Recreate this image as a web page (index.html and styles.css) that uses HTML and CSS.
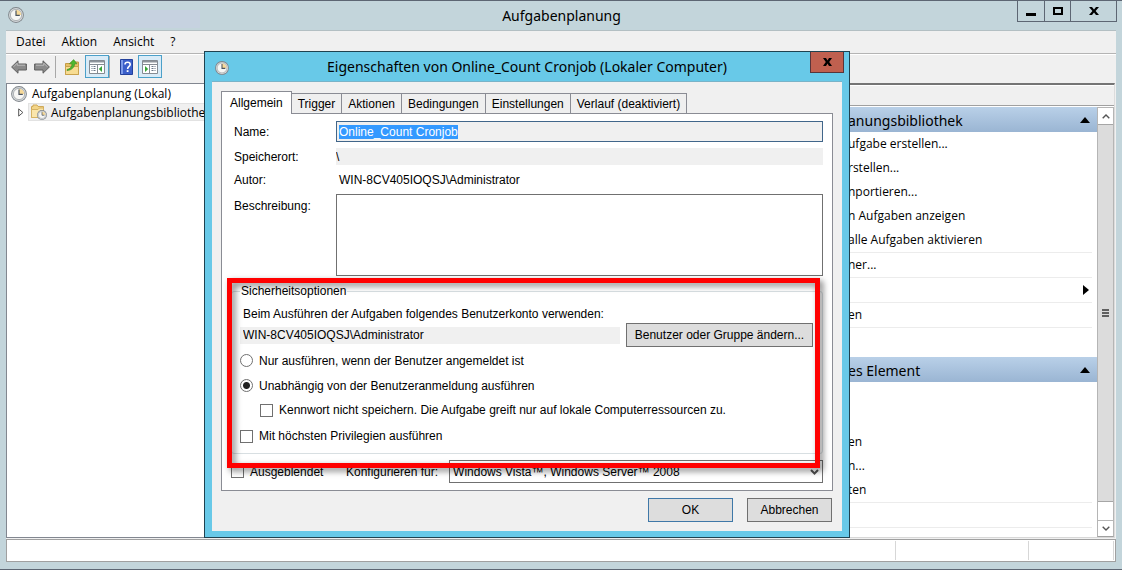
FILE: index.html
```html
<!DOCTYPE html>
<html lang="de">
  <head>
    <meta charset="UTF-8" />
    <meta name="viewport" content="width=device-width, initial-scale=1.0" />
    <title>Aufgabenplanung</title>
    <link rel="stylesheet" href="styles.css">
  </head>
  <body>
    <svg class="defs" aria-hidden="true">
      <symbol id="clock" viewBox="0 0 16 16">
        <circle cx="8" cy="8" r="7.9" fill="#7f858a" />
        <circle cx="8" cy="8" r="7" fill="#d4d8da" />
        <circle cx="8" cy="8" r="5.6" fill="#f7f7f5" stroke="#8b9095" stroke-width="0.6" />
        <path d="M8 8V2.8A5.2 5.2 0 0 1 13.2 8z" fill="#f6d999" />
        <path d="M8 3.4V8.4H11.8" fill="none" stroke="#4c5560" stroke-width="1.2" />
      </symbol>
      <symbol id="arrow" viewBox="0 0 16 14">
        <path d="M0.6 7L7 0.8V4H15.4V10H7V13.2z" fill="#8b8b8b" stroke="#5f5f5f" />
        <path d="M2.6 6.8L6.2 3.2V5.2H14" fill="none" stroke="#bdbdbd" />
      </symbol>
      <symbol id="pane" viewBox="0 0 16 14">
        <path d="M0.5 0.5H15.5V13.5H0.5z" fill="#fff" stroke="#858b92" />
        <path d="M1 1H15V2.5H1z" fill="#8e949b" />
        <path d="M1 4.5H15M8.5 5V13" stroke="#858b92" />
        <path d="M2.5 6.5H6.5M2.5 8.5H6.5M2.5 10.5H6.5" stroke="#697585" stroke-dasharray="1 1 2" />
        <path d="M13 6V12L9.8 9z" fill="#36a536" />
      </symbol>
    </svg>

    <div class="window">
      <header class="titlebar">
        <svg class="icon"><use href="#clock" /></svg>
        <h1>Aufgabenplanung</h1>
        <div class="windowButtons">
          <button class="minimize" aria-label="Minimieren"><svg width="10" height="10"><path d="M0 7H10V10H0z" /></svg></button>
          <button class="maximize" aria-label="Maximieren"><svg width="10" height="8"><path d="M1 1H9V7H1z" fill="none" stroke="#000" stroke-width="2" /></svg></button>
          <button class="close" aria-label="Schließen"><svg width="10" height="8"><path d="M0 0H3L5 2.6L7 0H10L6.6 4L10 8H7L5 5.4L3 8H0L3.4 4z" /></svg></button>
        </div>
      </header>

      <div class="frame">
        <nav class="menubar">
          <button>Datei</button>
          <button>Aktion</button>
          <button>Ansicht</button>
          <button>?</button>
        </nav>

        <div class="toolbar">
          <button aria-label="Zurück"><svg width="16" height="14"><use href="#arrow" /></svg></button>
          <button class="forward" aria-label="Vorwärts"><svg class="flip" width="16" height="14"><use href="#arrow" /></svg></button>
          <span class="divider"></span>
          <button class="up" aria-label="Übergeordneter Ordner">
            <svg width="16" height="16">
              <path d="M1.5 4.5H6L7.5 3H14.5V15.5H1.5z" fill="#e8c066" stroke="#c39b45" />
              <path d="M1.5 7.5H14.5V15.5H1.5z" fill="#f7dc92" stroke="#c9a24d" />
              <path d="M3 10.5C6 10 8 8 8 4.8H5.5L9.6 0.6L13 4.8H10.6C10.6 8.6 7 11.4 3 11.6z" fill="#4cb82e" stroke="#398a22" stroke-width="0.6" />
            </svg>
          </button>
          <button class="toggle" aria-label="Konsolenstruktur"><svg width="16" height="14"><use href="#pane" /></svg></button>
          <span class="divider"></span>
          <button class="help" aria-label="Hilfe">
            <svg width="13" height="16">
              <path d="M0.5 0.5H12.5V15.5H0.5z" fill="#3b5fca" stroke="#24419c" />
              <path d="M1 1H3V15H1z" fill="#7d9bea" />
              <path d="M5 5.4C5 2.6 10.2 2.6 10.2 5.4C10.2 7.4 7.6 7.4 7.6 10" fill="none" stroke="#fff" stroke-width="1.6" />
              <path d="M6.7 11.2H8.5V13H6.7z" fill="#fff" />
            </svg>
          </button>
          <button class="toggle" aria-label="Aktionsbereich"><svg class="flip" width="16" height="14"><use href="#pane" /></svg></button>
        </div>

        <main class="panes">
          <div class="tree">
            <div class="root"><svg class="icon"><use href="#clock" /></svg>Aufgabenplanung (Lokal)</div>
            <div class="branch">
              <svg class="expander" width="6" height="9"><path d="M0.7 0.9L4.9 4.5L0.7 8.1z" fill="#fff" stroke="#555" /></svg>
              <div class="selected">
                <svg width="17" height="16">
                  <path d="M1.5 13.5V2.5H3V1H7L8 2.5H13.5V13.5z" fill="#f3d588" stroke="#cfa958" />
                  <path d="M1.5 5.5H8L9.5 4H13.5V13.5H1.5z" fill="#fae5ab" stroke="#d6b363" />
                  <svg x="7" y="6" width="10" height="10"><use href="#clock" /></svg>
                </svg>
                Aufgabenplanungsbibliothek
              </div>
            </div>
          </div>

          <div class="center"></div>

          <aside class="actions">
            <div class="actionsTitle"></div>
            <div class="actionsBody">
              <div class="actionsList">
                <h2><span>anungsbibliothek</span><svg width="10" height="6"><path d="M5 0L10 6H0z" /></svg></h2>
                <ul>
                  <li>ufgabe erstellen...</li>
                  <li>rstellen...</li>
                  <li>nportieren...</li>
                  <li>n Aufgaben anzeigen</li>
                  <li>alle Aufgaben aktivieren</li>
                  <li class="line">ner...</li>
                  <li class="line submenu"><svg width="6" height="10"><path d="M0 0L6 5L0 10z" /></svg></li>
                  <li class="line">en</li>
                  <li class="line"></li>
                </ul>
                <h2><span>es Element</span><svg width="10" height="6"><path d="M5 0L10 6H0z" /></svg></h2>
                <ul>
                  <li></li>
                  <li></li>
                  <li>en</li>
                  <li>n...</li>
                  <li>ten</li>
                  <li class="line"></li>
                  <li class="line end"></li>
                </ul>
              </div>
              <div class="scrollbar">
                <button aria-label="Nach oben"><svg width="8" height="5"><path d="M0.7 4.3L4 1L7.3 4.3" fill="none" stroke="#555" stroke-width="1.4" /></svg></button>
                <div class="thumb"><svg width="7" height="8"><path d="M0 1H7M0 4H7M0 7H7" stroke="#606060" stroke-width="2" /></svg></div>
                <button aria-label="Nach unten"><svg width="8" height="5"><path d="M0.7 0.7L4 4L7.3 0.7" fill="none" stroke="#555" stroke-width="1.4" /></svg></button>
              </div>
            </div>
          </aside>
        </main>

        <footer class="statusbar">
          <span class="message"></span>
          <span class="wide"></span>
          <span class="narrow"></span>
        </footer>
      </div>
    </div>

    <section class="dialog" role="dialog" aria-labelledby="dialogTitle">
      <header class="dialogTitlebar">
        <svg class="icon"><use href="#clock" /></svg>
        <h2 id="dialogTitle">Eigenschaften von Online_Count Cronjob (Lokaler Computer)</h2>
        <button class="dialogClose" aria-label="Schließen"><svg width="9" height="8"><path d="M0 0H3L4.5 2.4L6 0H9L6.2 4L9 8H6L4.5 5.6L3 8H0L2.8 4z" /></svg></button>
      </header>

      <form class="dialogContent">
        <div class="tabs" role="tablist">
          <button type="button" role="tab" class="active" aria-selected="true">Allgemein</button>
          <button type="button" role="tab">Trigger</button>
          <button type="button" role="tab">Aktionen</button>
          <button type="button" role="tab">Bedingungen</button>
          <button type="button" role="tab">Einstellungen</button>
          <button type="button" role="tab">Verlauf (deaktiviert)</button>
        </div>

        <div class="tabPanel" role="tabpanel">
          <div class="fields">
            <label for="name">Name:</label>
            <div class="nameBox"><output id="name">Online_Count Cronjob</output></div>
            <label for="location">Speicherort:</label>
            <input id="location" class="readonly" type="text" value="\" readonly />
            <label for="author">Autor:</label>
            <output id="author">WIN-8CV405IOQSJ\Administrator</output>
            <label for="description" class="top">Beschreibung:</label>
            <textarea id="description"></textarea>
          </div>

          <fieldset>
            <legend>Sicherheitsoptionen</legend>
            <label class="accountLabel" for="account">Beim Ausführen der Aufgaben folgendes Benutzerkonto verwenden:</label>
            <div class="account">
              <input id="account" class="readonly" type="text" value="WIN-8CV405IOQSJ\Administrator" readonly />
              <button type="button" class="button">Benutzer oder Gruppe ändern...</button>
            </div>
            <label class="option"><input type="radio" name="logon" />Nur ausführen, wenn der Benutzer angemeldet ist</label>
            <label class="option"><input type="radio" name="logon" checked />Unabhängig von der Benutzeranmeldung ausführen</label>
            <label class="option nested"><input type="checkbox" />Kennwort nicht speichern. Die Aufgabe greift nur auf lokale Computerressourcen zu.</label>
            <label class="option last"><input type="checkbox" />Mit höchsten Privilegien ausführen</label>
          </fieldset>

          <div class="configure">
            <label class="option hiddenTask"><input type="checkbox" />Ausgeblendet</label>
            <label for="target">Konfigurieren für:</label>
            <div class="selectBox">
              <select id="target">
                <option>Windows Vista™, Windows Server™ 2008</option>
              </select>
              <svg width="9" height="6"><path d="M1 1L4.5 4.5L8 1" fill="none" stroke="#505050" stroke-width="2" /></svg>
            </div>
          </div>
          <div class="highlight"></div>
        </div>

        <div class="dialogButtons">
          <button type="button" class="button default">OK</button>
          <button type="button" class="button">Abbrechen</button>
        </div>
      </form>
    </section>
  </body>
</html>
```
FILE: styles.css
```css
* {
  box-sizing: border-box;
}

body {
  margin: 0;
  font-family: 'Open Sans', 'Noto Sans', sans-serif;
  font-size: 12px;
  color: #000;
  position: relative;
}

h1,
h2,
ul {
  margin: 0;
  padding: 0;
  font-weight: normal;
  list-style: none;
}

button,
input,
select,
textarea {
  font: inherit;
  color: inherit;
  margin: 0;
  padding: 0;
  border: none;
  border-radius: 0;
  background: none;
}

svg {
  display: block;
  flex: none;
}

.defs {
  position: absolute;
  width: 0;
  height: 0;
}

.icon {
  width: 16px;
  height: 16px;
}

.flip {
  transform: scaleX(-1);
}

/* main window */
.window {
  display: flex;
  flex-direction: column;
  min-height: 100vh;
  padding: 0 5px 7px 6px;
  background-color: #c3d5db;
  border-top: 1px solid #5d6673;
  border-bottom: 1px solid #5d6673;
}

.titlebar {
  display: grid;
  grid-template-columns: 1fr auto 1fr;
  height: 29px;
  background: linear-gradient(#c6d2e0, #c6d2e0) 64px 9px / 130px 18px no-repeat;
}

.titlebar .icon {
  margin: 6px 0 0 2px;
}

.titlebar h1 {
  font-family: 'Noto Sans', 'Open Sans', sans-serif;
  font-size: 14px;
  line-height: 30px;
}

.windowButtons {
  display: flex;
  justify-self: end;
  height: 21px;
  border: 1px solid #5d6673;
  border-top: none;
}

.windowButtons button {
  display: flex;
  align-items: center;
  justify-content: center;
  width: 26px;
}

.windowButtons button + button {
  border-left: 1px solid #5d6673;
}

.windowButtons .close {
  width: 46px;
}

.frame {
  flex: 1;
  display: flex;
  flex-direction: column;
  margin-right: 1px;
  background-color: #f0f0f0;
  border-top: 1px solid #b3bfc3;
}

.menubar {
  display: flex;
  gap: 16px;
  height: 23px;
  padding: 0 10px 1px;
  border-bottom: 1px solid #b4b4b4;
}

.toolbar {
  display: flex;
  align-items: center;
  gap: 5px;
  height: 29px;
  padding: 0 5px 5px;
  border-top: 1px solid #fff;
}

.toolbar .divider {
  width: 1px;
  height: 22px;
  background-color: #a8a8a8;
}

.toolbar .forward {
  margin-left: 2px;
}

.toolbar .up {
  margin-left: 3px;
}

.toolbar .toggle {
  display: flex;
  align-items: center;
  justify-content: center;
  width: 24px;
  height: 23px;
  background-color: #d9ebf7;
  border: 1px solid #4ba0c9;
}

.toolbar .toggle + .divider {
  margin-left: -5px;
}

.toolbar .help {
  margin-left: 5px;
}

.panes {
  flex: 1;
  display: grid;
  grid-template-columns: 394px 1fr 271px;
}

.tree {
  background-color: #fff;
  border: 1px solid #828790;
}

.root {
  display: flex;
  align-items: center;
  gap: 5px;
  height: 19px;
  padding-left: 4px;
}

.branch {
  display: flex;
  align-items: center;
  gap: 4px;
  padding-left: 11px;
}

.selected {
  flex: 1;
  display: flex;
  align-items: center;
  gap: 4px;
  height: 18px;
  padding-left: 1px;
  background-color: #f0f0f0;
  border: 1px solid #e2e2e2;
}

.center {
  border-top: 2px solid #828282;
  background-color: #fff;
}

.actions {
  display: flex;
  flex-direction: column;
  margin-right: 1px;
  background-color: #fff;
  border-top: 2px solid #747474;
  border-right: 1px solid #dcdcdc;
  border-bottom: 1px solid #d8d8d8;
}

.actionsTitle {
  height: 20px;
  margin-top: 1px;
  background-color: #f0f0f0;
  border-bottom: 1px solid #a0a0a0;
}

.actionsBody {
  flex: 1;
  display: flex;
  padding-top: 1px;
}

.actionsList {
  flex: 1;
}

.actionsList h2 {
  display: flex;
  align-items: center;
  justify-content: space-between;
  height: 25px;
  padding: 1px 7px 0 3px;
  font-family: 'Noto Sans', 'Open Sans', sans-serif;
  font-size: 14px;
  background: linear-gradient(#b9d0e8, #9ab5d3);
}

.actionsList ul + h2 {
  margin-top: 5px;
}

.actionsList li {
  height: 24px;
  padding-left: 3px;
  margin-right: 5px;
  line-height: 24px;
}

.actionsList .line {
  height: 25px;
  border-top: 1px solid #ececec;
}

.actionsList .submenu {
  display: flex;
  align-items: center;
  justify-content: flex-end;
  padding-right: 3px;
}

.actionsList .end {
  height: 8px;
}

.scrollbar {
  display: flex;
  flex-direction: column;
  width: 17px;
  border: 1px solid #b5b5b5;
  border-bottom-color: #a0a0a0;
}

.scrollbar button {
  display: flex;
  align-items: center;
  justify-content: center;
  height: 16px;
}

.scrollbar button:last-child {
  margin-top: 18px;
  border-top: 1px solid #b5b5b5;
}

.thumb {
  flex: 1;
  display: flex;
  align-items: center;
  justify-content: center;
  background-color: #dcdcdc;
  border: 1px solid #a6a6a6;
  border-width: 1px 0;
}

.statusbar {
  display: flex;
  height: 23px;
  margin-top: 1px;
  padding: 1px;
  background-color: #fff;
  border: 1px solid #a0a0a0;
}

.statusbar span {
  border-right: 1px solid #d7d7d7;
}

.statusbar .message {
  flex: 1;
}

.statusbar .wide {
  width: 133px;
}

.statusbar .narrow {
  width: 85px;
}

/* properties dialog */
.dialog {
  position: absolute;
  top: 51px;
  left: 204px;
  right: 272px;
  padding: 0 7px 6px;
  font-family: 'Liberation Sans', Arial, sans-serif;
  font-size: 12px;
  line-height: 16px;
  background-color: #68c9e8;
  border: 1px solid #1f4250;
}

.dialogTitlebar {
  display: grid;
  grid-template-columns: 35px 1fr 35px;
  height: 29px;
}

.dialogTitlebar .icon {
  width: 14px;
  height: 14px;
  margin: 9px 0 0 3px;
}

.dialogTitlebar h2 {
  font-family: 'Noto Sans', 'Open Sans', sans-serif;
  font-size: 14px;
  line-height: 29px;
  text-align: center;
}

.dialogClose {
  display: flex;
  align-items: center;
  justify-content: center;
  width: 34px;
  height: 21px;
  margin-left: 3px;
  background-color: #c0604f;
  border: 1px solid #58353a;
  border-top: none;
}

.dialogContent {
  padding: 9px;
  background-color: #f0f0f0;
  border-top: 1px solid #79b3c8;
}

.tabs {
  display: flex;
  align-items: flex-end;
}

.tabs button {
  height: 20px;
  padding: 1px 6px 0;
  border: 1px solid #8a8c94;
  border-bottom: none;
  border-left: none;
  background-color: #efefef;
}

.tabs .active {
  position: relative;
  z-index: 1;
  height: 23px;
  padding: 0 8px 1px;
  margin-bottom: -1px;
  border-left: 1px solid #8a8c94;
  background-color: #fff;
}

.tabPanel {
  position: relative;
  padding: 7px 9px;
  background-color: #fff;
  border: 1px solid #8a8c94;
}

.fields {
  display: grid;
  grid-template-columns: 102px 1fr;
  grid-template-rows: 21px 17px 17px 82px;
  row-gap: 6px;
  padding-left: 3px;
  align-items: center;
}

.fields .top {
  align-self: start;
  padding-top: 4px;
}

.nameBox {
  height: 21px;
  padding: 2px;
  background-color: #f0f0f0;
  border: 1px solid #41668a;
}

.nameBox output {
  color: #fff;
  background-color: #3399ff;
}

.readonly {
  height: 17px;
  background-color: #f0f0f0;
}

#author {
  padding-left: 3px;
}

textarea {
  height: 82px;
  border: 1px solid #707070;
  resize: none;
}

fieldset {
  margin: 7px 0 6px;
  padding: 0 9px 3px 8px;
  border: 1px solid #d8dfe2;
  border-radius: 3px;
}

legend {
  padding: 0 1px;
}

.accountLabel {
  display: block;
  margin-top: 7px;
  padding-left: 3px;
}

.account {
  display: flex;
  align-items: center;
  gap: 6px;
  margin: 1px 0;
}

.account .readonly {
  flex: 1;
  padding-left: 3px;
}

.account .button {
  width: 187px;
}

.button {
  width: 85px;
  height: 24px;
  background-color: #dddddd;
  border: 1px solid #707070;
}

.option {
  display: flex;
  align-items: center;
  gap: 6px;
  height: 25px;
}

.option input {
  flex: none;
  appearance: none;
  width: 13px;
  height: 13px;
  background-color: #fff;
  border: 1px solid #707070;
}

.option input[type='radio'] {
  border-radius: 50%;
}

.option input[type='radio']:checked {
  background: radial-gradient(#222 3px, #fff 4px);
}

.nested {
  height: 24px;
  padding-left: 20px;
}

.last {
  height: 28px;
}

.configure {
  display: flex;
  align-items: center;
  height: 23px;
}

.hiddenTask {
  width: 115px;
}

.selectBox {
  flex: 1;
  display: grid;
  align-items: center;
  margin-left: 11px;
}

.selectBox select,
.selectBox svg {
  grid-area: 1 / 1;
}

.selectBox svg {
  justify-self: end;
  margin-right: 4px;
  pointer-events: none;
}

.selectBox select {
  appearance: none;
  width: 100%;
  height: 23px;
  padding-left: 3px;
  border: 1px solid #707070;
}

/* red frame over the security options */
.highlight {
  position: absolute;
  top: 164px;
  left: 5px;
  right: 12px;
  bottom: 22px;
  border: 5px solid #ff0000;
  filter: drop-shadow(3px 3px 3px rgba(0, 0, 0, 0.5));
  pointer-events: none;
}

.dialogButtons {
  display: flex;
  justify-content: flex-end;
  gap: 14px;
  padding: 7px 1px 0 0;
}

.default {
  border-color: #3f78a8;
}
```
